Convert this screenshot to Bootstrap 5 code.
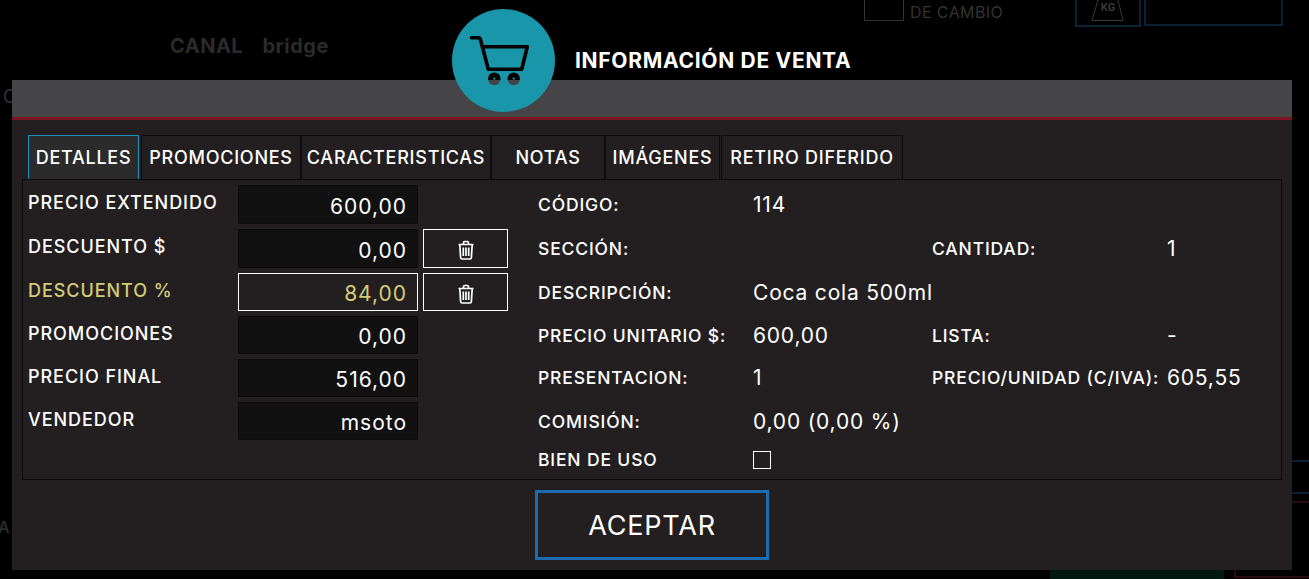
<!DOCTYPE html>
<html lang="es">
<head>
    <meta charset="UTF-8">
    <meta name="viewport" content="width=device-width, initial-scale=1.0">
    <title>Información de venta</title>
    <link href="https://cdn.jsdelivr.net/npm/bootstrap@5.3.0/dist/css/bootstrap.min.css" rel="stylesheet">
    <style>
        html, body {
            height: 579px;
            overflow: hidden;
        }
        body {
            background-color: #000;
            color: #fff;
            font-family: Inter, "Liberation Sans", sans-serif;
            position: relative;
        }
        /* lo que queda atras del modal, casi apagado */
        .bg-item {
            position: absolute;
            color: #2b2b2b;
        }
        .bg-canal { left: 170px; top: 34px; font-size: 20px; font-weight: 700; line-height: 24px; letter-spacing: .5px; word-spacing: 14px; }
        .bg-cambio { left: 910px; top: 2px; font-size: 16px; letter-spacing: .4px; color: #333; line-height: 20px; }
        .bg-check { left: 864px; top: -2px; width: 40px; height: 23px; border: 1px solid #333; }
        .bg-kg { left: 1075px; top: -2px; width: 66px; height: 29px; border: 2px solid #0b2236; }
        .bg-kg-ico { left: 1091px; top: 0; }
        .bg-kg-txt { left: 1091px; top: 0; width: 34px; text-align: center; font-size: 10px; font-weight: 700; color: #3a3a3a; line-height: 14px; }
        .bg-box { left: 1144px; top: -2px; width: 139px; height: 28px; border: 2px solid #0b2236; }
        .bg-c { left: 3px; top: 83px; font-size: 18px; color: #333; }
        .bg-a { left: -2px; top: 515px; font-size: 16px; font-weight: 600; color: #2b2b2b; }
        .bg-green { left: 1050px; top: 570px; width: 174px; height: 9px; background: #001a12; }
        .bg-red { left: 1234px; top: 570px; width: 75px; height: 8px; border-left: 2px solid #2c0a10; border-bottom: 2px solid #2c0a10; }
        .bg-line1 { left: 1292px; top: 460px; width: 17px; height: 2px; background: #0b2236; }
        .bg-line2 { left: 1292px; top: 492px; width: 17px; height: 2px; background: #0b2236; }
        .bg-line3 { left: 1292px; top: 501px; width: 17px; height: 2px; background: #2c0a10; }

        .venta-modal {
            position: relative;
            margin: 80px 17px 0 12px;
            height: 490px;
            background: #231f20;
        }
        .venta-head {
            height: 40px;
            background: #454547;
            border-bottom: 3px solid #7d1424;
        }
        .venta-logo {
            position: absolute;
            left: 440px;
            top: -71px;
            width: 103px;
            height: 103px;
        }
        .venta-title {
            position: absolute;
            left: 563px;
            top: -33px;
            font-size: 21px;
            font-weight: 700;
            line-height: 28px;
            white-space: nowrap;
            letter-spacing: .7px;
        }
        .venta-body {
            padding: 15px 10px 0;
        }
        .tabs-venta {
            padding-left: 6px;
            height: 44px;
            flex-wrap: nowrap;
        }
        .tabs-venta .nav-link {
            height: 44px;
            padding: 0;
            border: 1px solid #0c0a0b;
            border-bottom: 0;
            border-radius: 0;
            background: transparent;
            color: #fff;
            font-size: 18px;
            font-weight: 500;
            letter-spacing: .75px;
            text-align: center;
            white-space: nowrap;
        }
        .tabs-venta .nav-link.active {
            background: #2b2b2b;
            color: #fff;
            border: 1px solid #1a8fc0;
            border-bottom: 0;
        }
        .tab-w1 { width: 111px; margin-right: 2px; }
        .tab-w2 { width: 160px; }
        .tab-w3 { width: 190px; }
        .tab-w4 { width: 114px; }
        .tab-w5 { width: 115px; margin-right: 1px; }
        .tab-w6 { width: 182px; }

        .panel-venta {
            width: 1260px;
            height: 301px;
            border: 1px solid #0c0a0b;
            padding: 5px 5px 0;
        }
        .lado-izq {
            width: 510px;
            flex-shrink: 0;
        }
        .fila-izq {
            display: flex;
            height: 38px;
            margin-bottom: 5px;
        }
        .fila-alta { height: 39px; }
        .rotulo {
            width: 210px;
            font-size: 18px;
            font-weight: 500;
            letter-spacing: .95px;
            line-height: 35px;
            white-space: nowrap;
        }
        .campo-venta.form-control {
            width: 180px;
            height: 100%;
            padding: 3px 10px 0 0;
            border: 1px solid #0c0a0b;
            border-radius: 0;
            background: #111;
            color: #fff;
            font-family: inherit;
            font-size: 21px;
            letter-spacing: 1px;
            text-align: right;
            box-shadow: none;
        }
        .fila-oro .rotulo { color: #d3cb76; }
        .fila-oro .campo-venta.form-control {
            background: #231f20;
            border-color: #fff;
            color: #d3cb76;
        }
        .btn-borrar {
            width: 85px;
            height: 100%;
            margin-left: 5px;
            padding: 0;
            border: 1px solid #fff;
            border-radius: 0;
            color: #fff;
        }
        .lado-der {
            display: grid;
            grid-template-columns: 215px 179px 235px 100px;
            grid-template-rows: 40px 48px 40px 46px 38px 50px 26px;
            align-items: center;
            font-size: 17.5px;
            font-weight: 500;
            letter-spacing: .85px;
            white-space: nowrap;
        }
        .lado-der .dato {
            font-size: 21px;
            font-weight: 400;
            letter-spacing: .8px;
        }
        .check-uso.form-check-input {
            display: block;
            width: 18px;
            height: 18px;
            margin: 0;
            background-color: transparent;
            border: 1px solid #fff;
            border-radius: 0;
        }
        .pie-venta {
            padding-top: 10px;
        }
        .btn-aceptar {
            width: 234px;
            height: 70px;
            padding: 3px 0 0;
            border: 3px solid #1b6cb0;
            border-radius: 0;
            color: #fff;
            font-size: 27px;
            letter-spacing: .8px;
        }
    </style>
</head>
<body>
    <!-- fondo apagado -->
    <div class="bg-item bg-canal">CANAL bridge</div>
    <div class="bg-item bg-check"></div>
    <div class="bg-item bg-cambio">DE CAMBIO</div>
    <div class="bg-item bg-kg"></div>
    <svg class="bg-item bg-kg-ico" width="34" height="21" viewBox="0 0 34 21" fill="none" stroke="#3a3a3a" stroke-width="1"><path d="M7 0 1 20.500h31L27 0"/></svg>
    <div class="bg-item bg-kg-txt">KG</div>
    <div class="bg-item bg-box"></div>
    <div class="bg-item bg-c">C</div>
    <div class="bg-item bg-a">A</div>
    <div class="bg-item bg-green"></div>
    <div class="bg-item bg-red"></div>
    <div class="bg-item bg-line1"></div>
    <div class="bg-item bg-line2"></div>
    <div class="bg-item bg-line3"></div>

    <div class="venta-modal">
        <svg class="venta-logo" viewBox="0 0 103 103" aria-hidden="true">
            <defs>
                <mask id="ruedas">
                    <rect width="103" height="103" fill="#fff"/>
                    <circle cx="42.300" cy="69.700" r="6.300" fill="#000"/>
                    <circle cx="61.700" cy="69.700" r="6.300" fill="#000"/>
                    <circle cx="42.300" cy="69.700" r="1.100" fill="#fff"/>
                    <circle cx="61.700" cy="69.700" r="1.100" fill="#fff"/>
                </mask>
            </defs>
            <circle cx="51.500" cy="51.500" r="51.500" fill="#1a96aa" mask="url(#ruedas)"/>
            <path d="M19.500 28.700h7q1.500 0 2 2l7.800 29.600h33.400l5.600-22.600h-44" fill="none" stroke="#000" stroke-width="3.600" stroke-linecap="round" stroke-linejoin="round"/>
        </svg>
        <div class="venta-title">INFORMACIÓN DE VENTA</div>
        <div class="venta-head"></div>
        <div class="venta-body">
            <ul class="nav tabs-venta">
                <li class="nav-item"><button class="nav-link active tab-w1" type="button">DETALLES</button></li>
                <li class="nav-item"><button class="nav-link tab-w2" type="button">PROMOCIONES</button></li>
                <li class="nav-item"><button class="nav-link tab-w3" type="button">CARACTERISTICAS</button></li>
                <li class="nav-item"><button class="nav-link tab-w4" type="button">NOTAS</button></li>
                <li class="nav-item"><button class="nav-link tab-w5" type="button">IMÁGENES</button></li>
                <li class="nav-item"><button class="nav-link tab-w6" type="button">RETIRO DIFERIDO</button></li>
            </ul>
            <div class="panel-venta d-flex">
                <div class="lado-izq">
                    <div class="fila-izq fila-alta">
                        <span class="rotulo">PRECIO EXTENDIDO</span>
                        <input class="form-control campo-venta" type="text" value="600,00" readonly>
                    </div>
                    <div class="fila-izq fila-alta">
                        <span class="rotulo">DESCUENTO $</span>
                        <input class="form-control campo-venta" type="text" value="0,00" readonly>
                        <button class="btn btn-borrar" type="button" aria-label="Borrar descuento">
                            <svg width="18" height="20" viewBox="0 0 18 20" fill="none" stroke="#fff" stroke-width="1.700"><path d="M1.500 4.500h15M6.500 4.200v-1.500q0-1.200 1.200-1.200h2.600q1.200 0 1.200 1.200v1.500M2.800 4.500l.8 13q.1 1.500 1.600 1.500h7.600q1.500 0 1.600-1.500l.8-13M6.300 7.500v8.500M9 7.500v8.500M11.700 7.500v8.500"/></svg>
                        </button>
                    </div>
                    <div class="fila-izq fila-oro">
                        <span class="rotulo">DESCUENTO %</span>
                        <input class="form-control campo-venta" type="text" value="84,00" readonly>
                        <button class="btn btn-borrar" type="button" aria-label="Borrar descuento porcentual">
                            <svg width="18" height="20" viewBox="0 0 18 20" fill="none" stroke="#fff" stroke-width="1.700"><path d="M1.500 4.500h15M6.500 4.200v-1.500q0-1.200 1.200-1.200h2.600q1.200 0 1.200 1.200v1.500M2.800 4.500l.8 13q.1 1.500 1.600 1.500h7.600q1.500 0 1.600-1.500l.8-13M6.300 7.500v8.500M9 7.500v8.500M11.700 7.500v8.500"/></svg>
                        </button>
                    </div>
                    <div class="fila-izq">
                        <span class="rotulo">PROMOCIONES</span>
                        <input class="form-control campo-venta" type="text" value="0,00" readonly>
                    </div>
                    <div class="fila-izq">
                        <span class="rotulo">PRECIO FINAL</span>
                        <input class="form-control campo-venta" type="text" value="516,00" readonly>
                    </div>
                    <div class="fila-izq">
                        <span class="rotulo">VENDEDOR</span>
                        <input class="form-control campo-venta" type="text" value="msoto" readonly>
                    </div>
                </div>
                <div class="lado-der">
                    <span>CÓDIGO:</span><span class="dato">114</span><span></span><span></span>
                    <span>SECCIÓN:</span><span></span><span>CANTIDAD:</span><span class="dato">1</span>
                    <span>DESCRIPCIÓN:</span><span class="dato">Coca cola 500ml</span><span></span><span></span>
                    <span>PRECIO UNITARIO $:</span><span class="dato">600,00</span><span>LISTA:</span><span class="dato">-</span>
                    <span>PRESENTACION:</span><span class="dato">1</span><span>PRECIO/UNIDAD (C/IVA):</span><span class="dato">605,55</span>
                    <span>COMISIÓN:</span><span class="dato">0,00 (0,00 %)</span><span></span><span></span>
                    <span>BIEN DE USO</span><span><input class="form-check-input check-uso" type="checkbox" aria-label="Bien de uso"></span><span></span><span></span>
                </div>
            </div>
            <div class="pie-venta d-flex justify-content-center">
                <button class="btn btn-aceptar" type="button">ACEPTAR</button>
            </div>
        </div>
    </div>

    <script src="https://cdn.jsdelivr.net/npm/bootstrap@5.3.0/dist/js/bootstrap.bundle.min.js"></script>
</body>
</html>
